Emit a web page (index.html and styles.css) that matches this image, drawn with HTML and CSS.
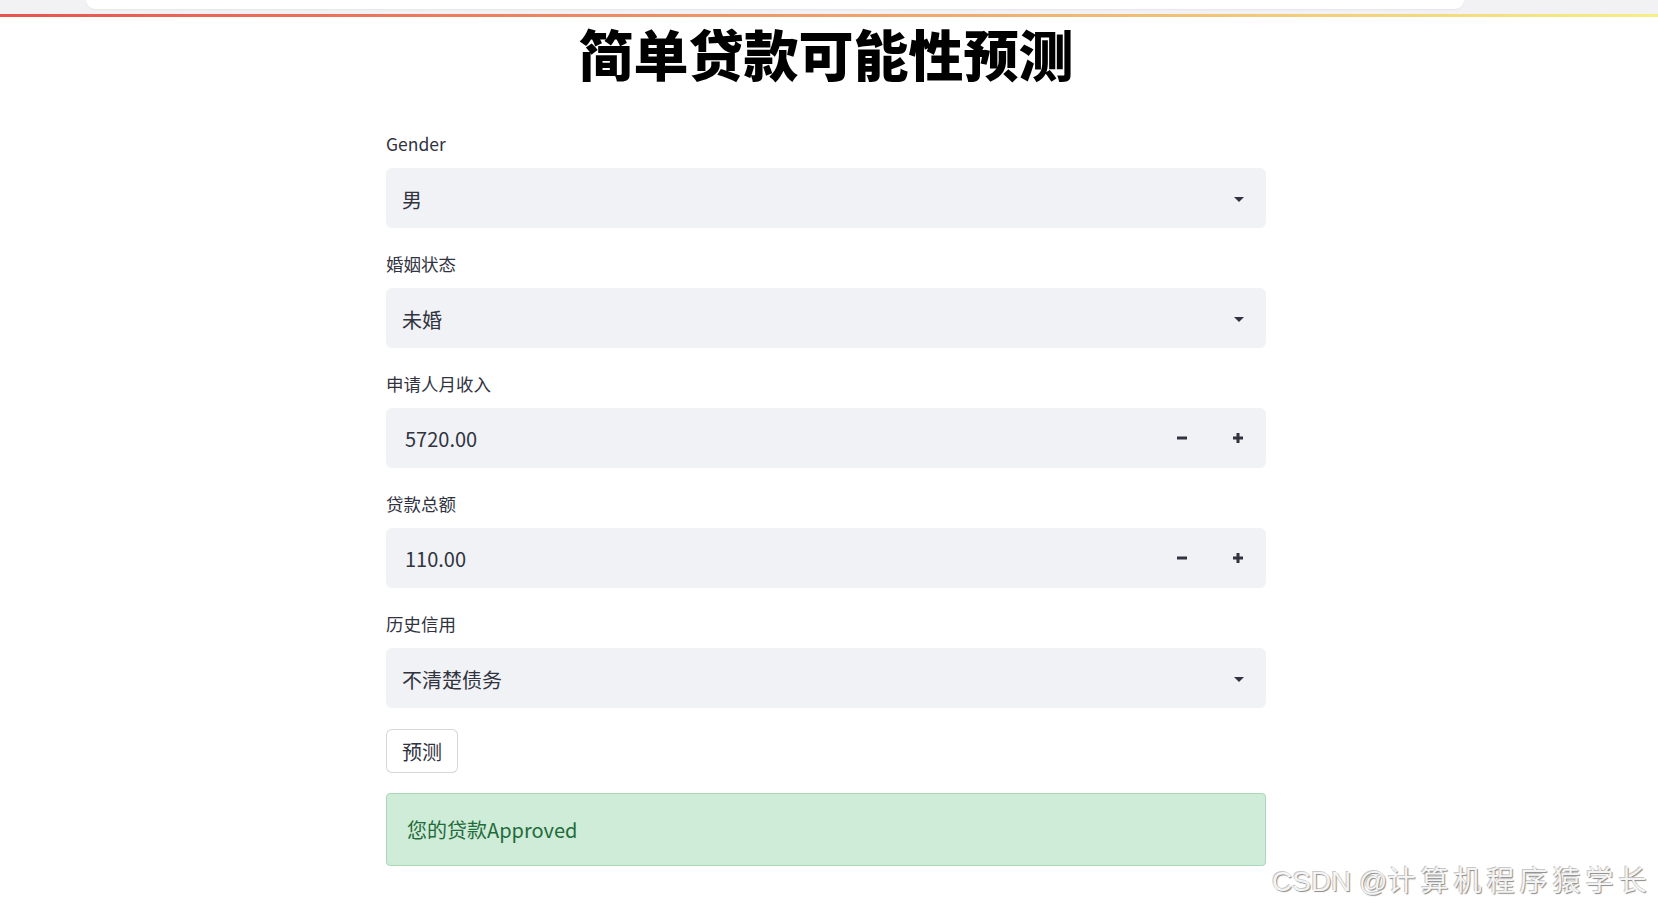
FILE: index.html
```html
<!DOCTYPE html>
<html lang="zh">
	<head>
		<meta charset="UTF-8" />
		<meta name="viewport" content="width=device-width, initial-scale=1.0" />
		<title>简单贷款可能性预测</title>
		<link rel="stylesheet" href="styles.css">
	</head>
	<body>
		<div class="topbar"><div class="tab"></div></div>
		<div class="decoration"></div>

		<main class="main">
			<h1 class="title">简单贷款可能性预测</h1>

			<div class="field">
				<label class="field-label">Gender</label>
				<div class="select">
					<span class="select-value">男</span>
					<svg class="arrow" width="10" height="5" viewBox="0 0 10 5"><path d="M0 0H10L5 5Z" /></svg>
				</div>
			</div>

			<div class="field">
				<label class="field-label">婚姻状态</label>
				<div class="select">
					<span class="select-value">未婚</span>
					<svg class="arrow" width="10" height="5" viewBox="0 0 10 5"><path d="M0 0H10L5 5Z" /></svg>
				</div>
			</div>

			<div class="field">
				<label class="field-label">申请人月收入</label>
				<div class="number">
					<span class="number-value">5720.00</span>
					<button class="step" type="button"><svg width="10" height="10" viewBox="0 0 10 10"><rect x="0" y="3.5" width="10" height="3" /></svg></button>
					<button class="step" type="button"><svg width="10" height="10" viewBox="0 0 10 10"><rect x="0" y="3.5" width="10" height="3" /><rect x="3.5" y="0" width="3" height="10" /></svg></button>
				</div>
			</div>

			<div class="field">
				<label class="field-label">贷款总额</label>
				<div class="number">
					<span class="number-value">110.00</span>
					<button class="step" type="button"><svg width="10" height="10" viewBox="0 0 10 10"><rect x="0" y="3.5" width="10" height="3" /></svg></button>
					<button class="step" type="button"><svg width="10" height="10" viewBox="0 0 10 10"><rect x="0" y="3.5" width="10" height="3" /><rect x="3.5" y="0" width="3" height="10" /></svg></button>
				</div>
			</div>

			<div class="field">
				<label class="field-label">历史信用</label>
				<div class="select">
					<span class="select-value">不清楚债务</span>
					<svg class="arrow" width="10" height="5" viewBox="0 0 10 5"><path d="M0 0H10L5 5Z" /></svg>
				</div>
			</div>

			<button class="btn" type="button">预测</button>

			<div class="alert">您的贷款Approved</div>
		</main>

		<div class="watermark">CSDN @<span class="watermark-name">计算机程序猿学长</span></div>
	</body>
</html>
```

FILE: styles.css
```css
body {
	margin: 0;
	height: 912px;
	overflow: hidden;
	background: #fff;
	color: #31333f;
	font-family: "Noto Sans CJK SC", "Noto Sans", sans-serif;
	position: relative;
}
.topbar {
	height: 14px;
	background: #f2f2f5;
}
.tab {
	margin-left: 86px;
	width: 1378px;
	height: 9px;
	background: #fff;
	border-radius: 0 0 12px 12px;
	box-shadow: 0 1px 2px rgba(0, 0, 0, 0.05);
}
.decoration {
	height: 3px;
	background: linear-gradient(90deg, #e9524f, #eda06c 50%, #f6ef84);
}
.main {
	width: 880px;
	margin: 0 auto;
	padding-right: 6px;
}
.title {
	margin: 2px 0 47px;
	font-size: 55px;
	line-height: 66px;
	font-weight: 900;
	color: #000;
	text-align: center;
}
.field + .field {
	margin-top: 24px;
}
.field-label {
	display: block;
	font-size: 17.5px;
	line-height: 24px;
	margin-bottom: 12px;
}
.select,
.number {
	display: flex;
	align-items: center;
	height: 60px;
	background: #f0f2f6;
	border-radius: 6px;
	font-size: 20px;
}
.select {
	padding: 0 22px 0 16px;
}
.select-value {
	flex: 1;
	padding-top: 2px;
}
.arrow {
	fill: #31333f;
	margin-top: 2px;
}
.number {
	padding-left: 19px;
}
.number-value {
	flex: 1;
}
.step {
	width: 56px;
	height: 100%;
	border: none;
	background: transparent;
	padding: 0;
	display: flex;
	align-items: center;
	justify-content: center;
	fill: #31333f;
}
.btn {
	display: block;
	margin-top: 21px;
	height: 44px;
	padding: 0 15px;
	background: #fff;
	border: 1px solid rgba(49, 51, 63, 0.2);
	border-radius: 6px;
	font-family: inherit;
	font-size: 20px;
	color: #31333f;
}
.alert {
	margin-top: 20px;
	padding: 23px 20px;
	line-height: 25px;
	font-size: 20px;
	background: #cfecd8;
	border: 1px solid #a9d9b6;
	border-radius: 4px;
	color: #1f6b3a;
}
.watermark {
	position: absolute;
	left: 1272px;
	top: 863px;
	font-family: "Liberation Sans", "Noto Sans CJK SC", sans-serif;
	font-size: 28px;
	line-height: 38px;
	color: #f4f4f4;
	text-shadow: 1px 1px 1px #8a8a8a, -1px -1px 0 #c8c8c8;
	white-space: nowrap;
}
.watermark-name {
	letter-spacing: 5px;
}
```
